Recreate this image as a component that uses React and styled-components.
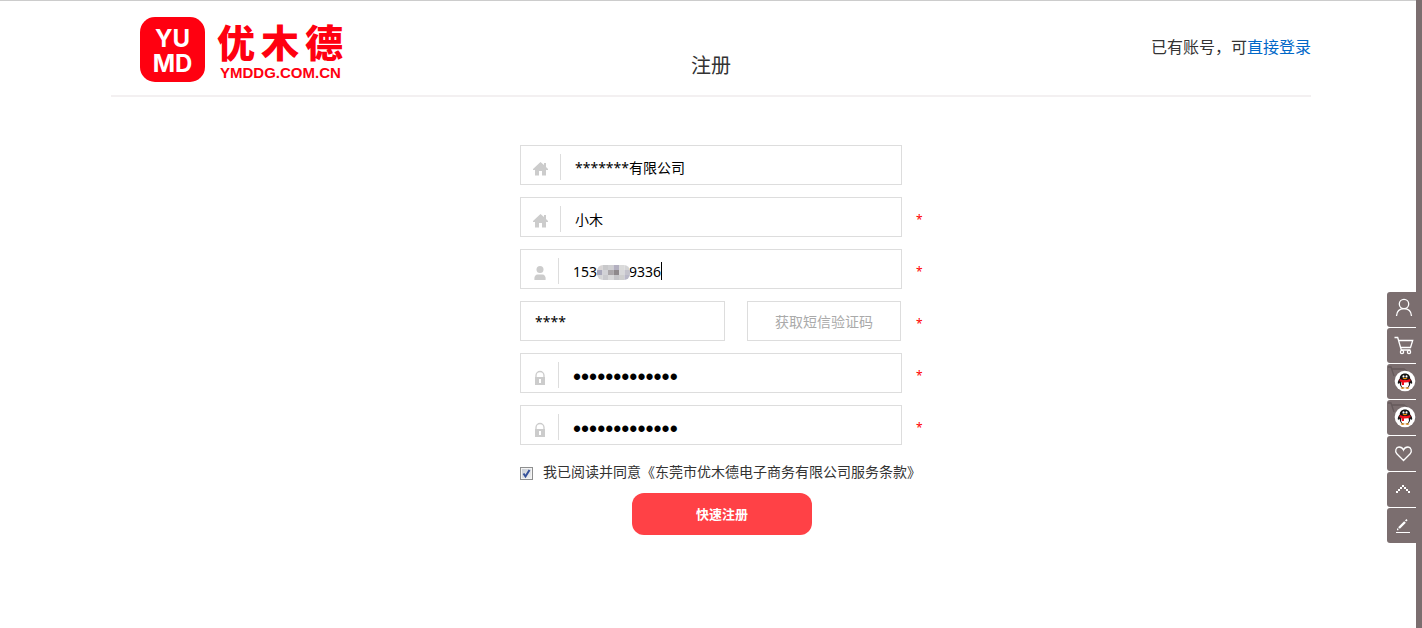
import React from "react";
import styled, { createGlobalStyle } from "styled-components";

const GlobalStyle = createGlobalStyle`
  * { box-sizing: border-box; }
  body {
    margin: 0;
    background: #fff;
    color: #333;
    font-family: "Noto Sans", "Noto Sans CJK SC", sans-serif;
    font-size: 14px;
  }
`;

const Page = styled.div`
  min-height: 100vh;
  border-top: 1px solid #ccc;
`;

const Header = styled.header`
  display: grid;
  grid-template-columns: 1fr auto 1fr;
  align-items: start;
  max-width: 1200px;
  height: 96px;
  margin: 0 auto;
  border-bottom: 2px solid #f3f0f1;
`;

const Logo = styled.a`
  display: flex;
  gap: 12px;
  padding: 16px 0 0 29px;
  color: #ff0010;
  text-decoration: none;
`;

const LogoBadge = styled.span`
  width: 65px;
  height: 65px;
  padding-top: 9px;
  border-radius: 15px;
  background: #ff0010;
  color: #fff;
  text-align: center;
  font: bold 24px/25px Inter, sans-serif;
`;

const LogoWords = styled.span`
  display: flex;
  flex-direction: column;
`;

const LogoName = styled.span`
  display: flex;
  gap: 6px;
  font: 900 38px/48px "Noto Sans CJK SC", sans-serif;
`;

const LogoDomain = styled.span`
  padding-left: 3px;
  font: bold 15px/16px "Liberation Sans", sans-serif;
`;

const Title = styled.h1`
  margin: 51px 0 0;
  font-size: 20px;
  line-height: 28px;
  font-weight: 400;
`;

const LoginHint = styled.p`
  margin: 34px 0 0;
  text-align: right;
  font-size: 16px;
  line-height: 24px;
`;

const LoginLink = styled.a`
  color: #0068c8;
  text-decoration: none;
`;

const Form = styled.form`
  display: flex;
  flex-direction: column;
  gap: 12px;
  width: 426px;
  margin: 48px auto 0;
  padding-left: 22px;
`;

const Row = styled.div`
  display: flex;
  align-items: center;
`;

const Field = styled.label`
  position: relative;
  display: flex;
  align-items: center;
  width: ${(p) => p.$width || 382}px;
  height: 40px;
  border: 1px solid #ddd;
`;

const FieldIcon = styled.span`
  display: flex;
  justify-content: center;
  align-items: center;
  width: ${(p) => (p.$wide ? 40 : 38)}px;
  height: 26px;
  margin-top: 4px;
  padding-top: 4px;
  border-right: 1px solid #ddd;
`;

const TextInput = styled.input`
  flex: 1;
  min-width: 0;
  height: 38px;
  padding: ${(p) => (p.$plain ? 0 : 4)}px 0 0 14px;
  border: 0;
  outline: 0;
  background: transparent;
  color: #000;
  font-family: "Noto Sans", "Noto Sans CJK SC", sans-serif;
  font-size: 14px;

  &[type="password"] {
    padding-top: 8px;
    font-family: "Liberation Sans", sans-serif;
    font-size: 23px;
  }
`;

const Mosaic = styled.svg`
  position: absolute;
  left: 76px;
  top: 15px;
`;

const Caret = styled.span`
  position: absolute;
  left: 140px;
  top: 12px;
  width: 1px;
  height: 18px;
  background: #000;
`;

const Required = styled.span`
  margin-left: auto;
  width: 8px;
  padding-top: 6px;
  color: #f00;
  font-size: 12px;
  line-height: 20px;
`;

const CodeButton = styled.button`
  width: 154px;
  height: 40px;
  margin-left: 22px;
  padding: 0;
  border: 1px solid #ddd;
  background: #fff;
  color: #aaa;
  font: inherit;
`;

const Agreement = styled.label`
  display: flex;
  align-items: center;
  gap: 9px;
  margin-top: 4px;
  height: 20px;
  white-space: nowrap;
`;

const CheckBox = styled.span`
  position: relative;
  display: flex;
  width: 14px;
  height: 13px;
  margin-top: 4px;

  svg {
    position: absolute;
    left: 0;
    top: 0;
    pointer-events: none;
  }
`;

const CheckInput = styled.input`
  appearance: none;
  width: 13px;
  height: 13px;
  margin: 0;
  border: 1px solid #8e8f8f;
  background: linear-gradient(135deg, #c5cad2, #f4f4f4);
  box-shadow: inset 0 0 0 1px #f4f4f4;

  &:not(:checked) + svg { display: none; }
`;

const SubmitButton = styled.button`
  align-self: center;
  width: 180px;
  height: 42px;
  padding: 0;
  border: 0;
  border-radius: 12px;
  background: #ff4146;
  color: #fff;
  font: bold 13px/20px "Noto Sans CJK SC", sans-serif;
`;

const SideBar = styled.nav`
  position: fixed;
  top: 0;
  right: 0;
  bottom: 0;
  display: flex;
  flex-direction: column;
  gap: 1px;
  padding-top: 292px;
  border-right: 6px solid #7b6e6f;
`;

const SideTab = styled.button`
  display: flex;
  justify-content: flex-end;
  align-items: center;
  width: 29px;
  height: 35px;
  padding: 0;
  border: 0;
  border-radius: 3px 0 0 3px;
  background: #7b6e6f;
`;

const HomeIcon = () => (
  <svg width="16" height="14" viewBox="0 0 16 14" fill="#ccc">
    <path d="M7.500 0 0 7v1h2v5.500h4V9h3v4.500h4V8h2V7l-2-2V1h-2v2z" />
  </svg>
);

const UserIcon = () => (
  <svg width="12" height="14" viewBox="0 0 12 14" fill="#ccc">
    <circle cx="6" cy="3.500" r="3.500" />
    <path d="M.5 14c-.6-3 .8-5.500 3-5.500h5c2.200 0 3.600 2.500 3 5.500z" />
  </svg>
);

const LockIcon = () => (
  <svg width="12" height="16" viewBox="0 -2 12 16">
    <path d="M2 6V4.500a4 4 0 0 1 8 0V6" fill="none" stroke="#ccc" strokeWidth="1.300" />
    <path d="M1 6h10v8H1zM5 8v4h2V8z" fill="#ccc" fillRule="evenodd" />
  </svg>
);

const TabSvg = ({ children }) => (
  <svg width="29" height="35" viewBox="0 0 29 35" fill="none" stroke="#fff" strokeWidth="1.300">
    {children}
  </svg>
);

const Penguin = () => (
  <TabSvg>
    <path d="M1 3h3l3 9M5 5h12l4 3" stroke="#655a5b" />
    <circle cx="18" cy="17" r="10.300" fill="#fff" stroke="none" />
    <g stroke="none">
      <path d="M18 9.500c-3.400 0-5.200 2.200-5.200 5-1.200 1.400-2.200 3-2 4.700.3.900 1.200.3 1.800-.5.300 2.400 1.300 4.200 2.600 5.300h5.600c1.300-1.100 2.300-2.900 2.600-5.300.6.800 1.500 1.400 1.800.5.200-1.700-.8-3.300-2-4.700 0-2.800-1.800-5-5.200-5z" fill="#111" />
      <ellipse cx="18" cy="20.300" rx="3.900" ry="3.700" fill="#fff" />
      <ellipse cx="16.500" cy="12.400" rx="1" ry="1.200" fill="#fff" />
      <ellipse cx="19.500" cy="12.400" rx="1" ry="1.200" fill="#fff" />
      <ellipse cx="18" cy="14.600" rx="2.400" ry=".7" fill="#f90" />
      <path d="M12.800 15c3.200 1.500 7.200 1.500 10.400 0l.4 2.300c-2 .9-4.300 1.300-6.600 1.200V21h-2.200v-2.900l-2.400-.8z" fill="#f0101c" />
      <ellipse cx="15.600" cy="24.100" rx="2" ry=".8" fill="#d98a20" />
      <ellipse cx="20.400" cy="24.100" rx="2" ry=".8" fill="#d98a20" />
    </g>
  </TabSvg>
);

const sideTabs = [
  {
    label: "我的账户",
    icon: (
      <TabSvg>
        <circle cx="17" cy="12" r="4.700" />
        <path d="M9.500 24c.3-4.500 3.300-7.300 7.500-7.300s7.200 2.800 7.500 7.300" />
      </TabSvg>
    ),
  },
  {
    label: "购物车",
    icon: (
      <TabSvg>
        <path d="M7.500 9.500h3.200l3.600 12.500h9.200M11.500 12.500h14.200l-2.200 7H13.800" />
        <circle cx="15" cy="24" r="1.600" />
        <circle cx="22" cy="24" r="1.600" />
      </TabSvg>
    ),
  },
  { label: "QQ客服一", icon: <Penguin /> },
  { label: "QQ客服二", icon: <Penguin /> },
  {
    label: "收藏",
    icon: (
      <TabSvg>
        <path d="M16.500 24.500 9.800 17.800C7.500 15 9 11 12 11c2.300 0 3.800 1.300 4.500 3 .7-1.700 2.200-3 4.500-3 3 0 4.500 4 2.200 6.800z" />
      </TabSvg>
    ),
  },
  {
    label: "返回顶部",
    icon: (
      <TabSvg>
        <path
          d="M9 19h2v2h-2zM11 17h2v2h-2zM13 15h2v2h-2zM15 13h2v2h-2zM17 15h2v2h-2zM19 17h2v2h-2zM21 19h2v2h-2z"
          fill="#fff"
          stroke="none"
        />
      </TabSvg>
    ),
  },
  {
    label: "反馈",
    icon: (
      <TabSvg>
        <path d="M9 24.500h14" strokeWidth="1" />
        <path d="M12 20 18 14" strokeWidth="2.400" />
        <path d="M18.600 13 20 11.600M10 21.300h1.400" strokeWidth="1.700" />
      </TabSvg>
    ),
  },
];

const mosaic = [
  ["#d8d4d4", "#c8c8ca", "#cfcfd1", "#b3b0c0", "#dadada", "#d4d4d6"],
  ["#a9a8bb", "#d2d2d6", "#aaa6a9", "#8e898b", "#d8d8da", "#c4c3cc"],
  ["#d5d5d6", "#cacace", "#d9d9da", "#c5c5c8", "#cecece", "#b9b8c8"],
];

const rows = [
  { id: "company", label: "公司名称", icon: <HomeIcon />, wide: true, value: "*******有限公司" },
  { id: "contact", label: "联系人", icon: <HomeIcon />, wide: true, value: "小木", required: true },
  { id: "phone", label: "手机号码", icon: <UserIcon />, value: "153\u2007\u2007\u2007\u20079336", masked: true, required: true },
  { id: "code", label: "短信验证码", value: "****", code: true, required: true },
  { id: "password", label: "密码", icon: <LockIcon />, value: "yumd123456789", type: "password", required: true },
  { id: "confirm", label: "确认密码", icon: <LockIcon />, value: "yumd123456789", type: "password", required: true },
];

const FormRow = ({ id, label, icon, wide, value, type = "text", masked, code, required }) => (
  <Row>
    <Field htmlFor={id} $width={code ? 205 : 382}>
      {icon && <FieldIcon $wide={wide}>{icon}</FieldIcon>}
      <TextInput id={id} aria-label={label} type={type} defaultValue={value} $plain={code} />
      {masked && (
        <>
          <Mosaic width="33" height="15" viewBox="0 0 33 15">
            <clipPath id="pill"><rect width="33" height="15" rx="6" /></clipPath>
            <g clipPath="url(#pill)">
              {mosaic.map((line, y) =>
                line.map((fill, x) => (
                  <rect key={`${x}-${y}`} x={x * 5.5} y={y * 5} width="5.500" height="5" fill={fill} />
                ))
              )}
            </g>
          </Mosaic>
          <Caret />
        </>
      )}
    </Field>
    {code && <CodeButton type="button">获取短信验证码</CodeButton>}
    {required && <Required>*</Required>}
  </Row>
);

export default function App() {
  return (
    <Page>
      <GlobalStyle />
      <Header>
        <Logo href="#">
          <LogoBadge>
            YU
            <br />
            MD
          </LogoBadge>
          <LogoWords>
            <LogoName>
              <span>优</span>
              <span>木</span>
              <span>德</span>
            </LogoName>
            <LogoDomain>YMDDG.COM.CN</LogoDomain>
          </LogoWords>
        </Logo>
        <Title>注册</Title>
        <LoginHint>
          已有账号，可<LoginLink href="#">直接登录</LoginLink>
        </LoginHint>
      </Header>
      <Form>
        {rows.map((row) => (
          <FormRow key={row.id} {...row} />
        ))}
        <Agreement htmlFor="agree">
          <CheckBox>
            <CheckInput id="agree" type="checkbox" defaultChecked />
            <svg width="13" height="13" viewBox="0 0 13 13" fill="none" stroke="#35519a" strokeWidth="2">
              <path d="M3.500 6.500 5.500 9.500 9.500 3" />
            </svg>
          </CheckBox>
          我已阅读并同意《东莞市优木德电子商务有限公司服务条款》
        </Agreement>
        <SubmitButton type="button">快速注册</SubmitButton>
      </Form>
      <SideBar>
        {sideTabs.map((tab) => (
          <SideTab key={tab.label} type="button" aria-label={tab.label}>
            {tab.icon}
          </SideTab>
        ))}
      </SideBar>
    </Page>
  );
}
